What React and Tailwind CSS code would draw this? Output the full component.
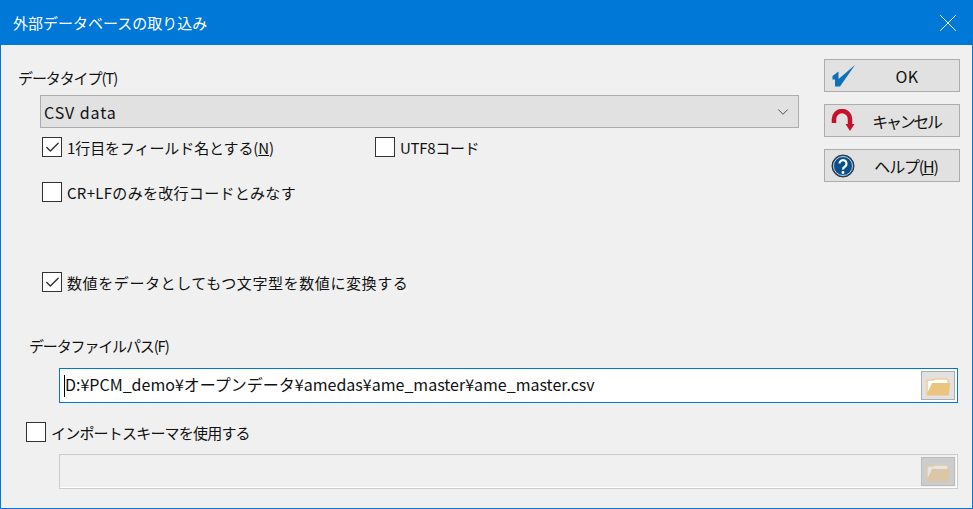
import React from 'react';
import { Check, ChevronDown, X } from 'lucide-react';

const FONT = "font-['Noto_Sans_CJK_JP','Noto_Sans',sans-serif]";

// Folder icon for the browse buttons
const FolderIcon = ({ dim }) => (
  <svg width="26" height="22" viewBox="0 0 26 22" className={dim ? 'opacity-50' : ''}>
    <path d="M2 20V6q0-1 1-1h5l2-1h12q1 0 1 1v4H8L2 20z" fill="#fff" stroke="#f0cd90" strokeWidth="1.5" />
    <path d="M1.500 20.500L7 8h18l-1 11q0 1.500-1.500 1.500H1.500z" fill="#ebc480" />
  </svg>
);

const CheckBox = ({ checked, label, className = '', textClass = '' }) => (
  <div className={`flex items-center gap-[5px] ${className}`}>
    <div className="w-[20px] h-[20px] shrink-0 bg-white border border-[#333] flex items-center justify-center">
      {checked && <Check size={17} strokeWidth={2} className="text-[#333]" />}
    </div>
    <span className={`text-[15px] leading-[19px] text-[#111] whitespace-nowrap pt-px ${textClass}`}>{label}</span>
  </div>
);

const SideButton = ({ icon, children, textClass = '' }) => (
  <button className="w-[136px] h-[33px] bg-[#e1e1e1] border border-[#adadad] flex items-center">
    <span className="w-[47px] pl-[6px] flex items-center shrink-0">{icon}</span>
    <span className={`flex-1 text-center text-[16px] leading-[20px] text-[#111] whitespace-nowrap ${textClass}`}>
      {children}
    </span>
  </button>
);

const PathBox = ({ value, disabled }) => (
  <div
    className={`ml-[58px] w-[899px] h-[35px] flex items-center justify-between pr-[2px] border ${
      disabled ? 'border-[#cccccc] bg-[#f0f0f0] shadow-[inset_-1px_-1px_0_#ffffff]' : 'border-[#0078d7] bg-white'
    }`}
  >
    <div className="flex items-center pl-[4px] text-[16px] leading-[20px] text-[#111]">
      {!disabled && <span className="w-px h-[22px] bg-black" />}
      <span className="pb-[3px]">{value}</span>
    </div>
    <button
      className={`w-[34px] h-[29px] flex items-center justify-center border ${
        disabled ? 'bg-[#cccccc] border-[#bcbcbc]' : 'bg-[#e1e1e1] border-[#adadad]'
      }`}
    >
      <FolderIcon dim={disabled} />
    </button>
  </div>
);

export default function App() {
  return (
    <div className={`w-[973px] h-[509px] bg-[#f0f0f0] border border-[#0078d7] flex flex-col ${FONT}`}>
      <div className="h-[44px] shrink-0 bg-[#0078d7] flex items-center justify-between pl-[12px] pr-[9px] text-white">
        <span className="text-[15px] leading-[20px]">外部データベースの取り込み</span>
        <X size={30} strokeWidth={0.8} />
      </div>

      <div className="flex justify-between pr-[12px]">
        <div className="flex flex-col">
          <div className="mt-[23px] ml-[17px] h-[20px] text-[15px] leading-[20px] text-[#111] tracking-[-1.1px]">データタイプ(T)</div>
          <div className="mt-[7px] ml-[39px] w-[759px] h-[33px] bg-[#e1e1e1] border border-[#adadad] flex items-center justify-between pl-[3px] pr-[6px]">
            <span className="text-[16px] leading-[20px] text-[#111] tracking-[0.9px]">CSV data</span>
            <ChevronDown size={18} strokeWidth={1.25} className="text-[#444]" />
          </div>
          <div className="mt-[9px] ml-[41px] flex">
            <CheckBox checked label={<>1行目をフィールド名とする(<u>N</u>)</>} className="w-[333px]" textClass="tracking-[-0.1px]" />
            <CheckBox label="UTF8コード" textClass="tracking-[-0.3px]" />
          </div>
          <CheckBox label="CR+LFのみを改行コードとみなす" className="mt-[25px] ml-[41px]" textClass="tracking-[0.3px]" />
          <CheckBox checked label="数値をデータとしてもつ文字型を数値に変換する" className="mt-[70px] ml-[41px]" textClass="tracking-[0.6px]" />
        </div>
        <div className="mt-[14px] flex flex-col gap-[12px]">
          <SideButton
            textClass="tracking-[0.5px] pr-[17px]"
            icon={
              <svg width="24" height="24" viewBox="0 0 24 24">
                <path d="M1.500 12L7.500 7.500 7.500 15 24 1 9 22.500 4 22.500 4 15.500 1.500 15.500z" fill="#0f70b7" />
              </svg>
            }
          >
            OK
          </SideButton>
          <SideButton
            textClass="tracking-[-2.300px] pr-[18px]"
            icon={
              <svg width="24" height="24" viewBox="0 0 24 24">
                <path d="M3 14V10a8 8 0 0 1 16 0v5" fill="none" stroke="#c8102e" strokeWidth="4.500" />
                <path d="M14.500 15h9l-4.500 7z" fill="#c8102e" />
              </svg>
            }
          >
            キャンセル
          </SideButton>
          <SideButton
            textClass="tracking-[-1.200px] pr-[19px]"
            icon={
              <svg width="24" height="24" viewBox="0 0 24 24">
                <circle cx="12" cy="12" r="11" fill="#0b4f8a" stroke="#333" strokeWidth="1" />
                <circle cx="12" cy="12" r="9.500" fill="#0b4f8a" stroke="#c5d3e0" strokeWidth="1" />
                <path d="M8.500 9.500a3.500 3.500 0 1 1 5.500 3c-1.500 1-2 1.500-2 3" fill="none" stroke="#fff" strokeWidth="2.200" />
                <circle cx="12" cy="18.500" r="1.400" fill="#fff" />
              </svg>
            }
          >
            ヘルプ(<u>H</u>)
          </SideButton>
        </div>
      </div>

      <div className="mt-[44px] ml-[28px] h-[20px] text-[15px] leading-[20px] text-[#111] tracking-[-1.15px]">データファイルパス(F)</div>
      <div className="mt-[12px]">
        <PathBox value="D:¥PCM_demo¥オープンデータ¥amedas¥ame_master¥ame_master.csv" />
      </div>
      <CheckBox label="インポートスキーマを使用する" className="mt-[19px] ml-[25px]" textClass="tracking-[-0.8px]" />
      <div className="mt-[12px]">
        <PathBox value="" disabled />
      </div>
    </div>
  );
}
